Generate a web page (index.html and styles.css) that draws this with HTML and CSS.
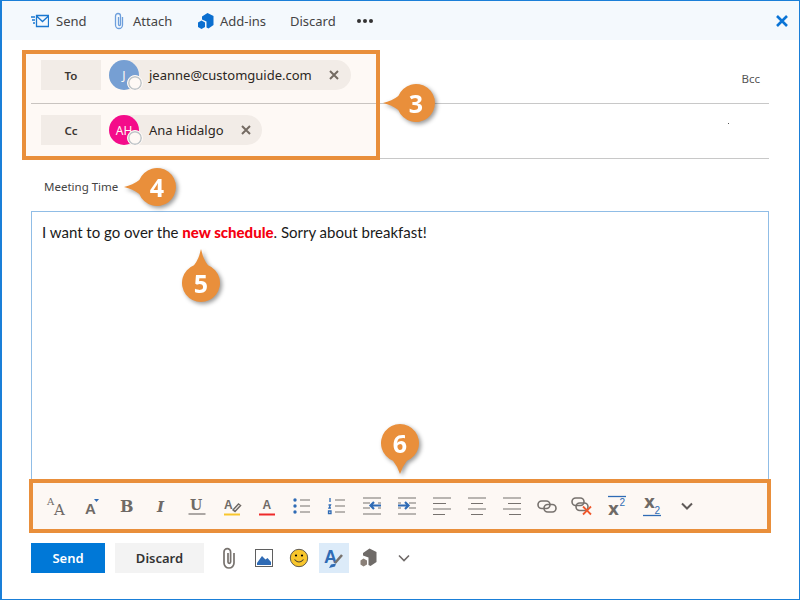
FILE: index.html
```html
<!DOCTYPE html>
<html lang="en">
<head>
<meta charset="utf-8">
<title>Compose</title>
<link rel="stylesheet" href="styles.css">
</head>
<body>
<div class="window">
  <header class="topbar">
    <div class="tb-item tb-send">
      <svg width="18" height="14" viewBox="0 0 18 14"><path class="ln-blue" d="M5.500 1.500h12v11h-12zM5.500 2l6 5.500 6-5.500"/><path class="ln-blue" d="M0 3h4M1 6h3M2 9h2"/></svg>
      <span>Send</span>
    </div>
    <div class="tb-item tb-attach">
      <svg width="12" height="18" viewBox="0 0 12 18"><path class="ln-clip" d="M9.500 5v8a3.500 3.500 0 0 1-7 0V4a2.500 2.500 0 0 1 5 0v8.500a1 1 0 0 1-2 0V5"/></svg>
      <span>Attach</span>
    </div>
    <div class="tb-item tb-addins">
      <svg width="18" height="18" viewBox="0 0 18 18"><path class="fill-blue" d="M5 4.500 10.500 1 16.500 4v9l-5 3.500-2-1V9.500L5 7.500zM1 10.500 4.500 8.500 8 10.500v4.500L4.500 17 1 15z"/></svg>
      <span>Add-ins</span>
    </div>
    <div class="tb-item tb-discard"><span>Discard</span></div>
    <div class="tb-dots"><i></i><i></i><i></i></div>
    <svg class="tb-close" width="12" height="12" viewBox="0 0 12 12"><path d="M1 1l10 10M11 1 1 11"/></svg>
  </header>

  <section class="fields">
    <div class="row">
      <div class="row-btn">To</div>
      <div class="chip chip-a">
        <div class="avatar av-j">J<i class="presence"></i></div>
        <span class="chip-name">jeanne@customguide.com</span>
        <svg class="chip-x" width="10" height="10" viewBox="0 0 10 10"><path d="M1 1l8 8M9 1 1 9"/></svg>
      </div>
      <span class="bcc">Bcc</span>
    </div>
    <div class="row row-last">
      <div class="row-btn">Cc</div>
      <div class="chip chip-b">
        <div class="avatar av-ah">AH<i class="presence"></i></div>
        <span class="chip-name">Ana Hidalgo</span>
        <svg class="chip-x" width="10" height="10" viewBox="0 0 10 10"><path d="M1 1l8 8M9 1 1 9"/></svg>
      </div>
      <i class="speck"></i>
    </div>
    <div class="field-highlight"></div>
  </section>

  <div class="subject">Meeting Time</div>

  <div class="editor">I want to go over the <b class="red">new schedule</b>. Sorry about breakfast!</div>

  <div class="format">
    <div class="fb"><svg viewBox="0 0 24 24"><text class="t-s" x="2" y="11" font-size="10">A</text><text class="t-s" x="9" y="21" font-size="15">A</text></svg></div>
    <div class="fb"><svg viewBox="0 0 24 24"><text class="t-g" x="5" y="20" font-size="15">A</text><path class="fill-b2" d="M14 5h5l-2.500 3z"/></svg></div>
    <div class="fb"><svg viewBox="0 0 24 24"><text class="t-s t-b" x="5" y="18" font-size="16">B</text></svg></div>
    <div class="fb"><svg viewBox="0 0 24 24"><text class="t-s t-i" x="7" y="18" font-size="15">I</text></svg></div>
    <div class="fb"><svg viewBox="0 0 24 24"><text class="t-s t-b" x="5" y="16" font-size="14">U</text><path class="ln-grey" d="M3.500 20h17"/></svg></div>
    <div class="fb"><svg viewBox="0 0 24 24"><text class="t-g" x="4" y="15" font-size="12">A</text><path class="ln-pen" d="M13 16l5.500-6 2 1.500-5.500 6z"/><path class="ln-yellow" d="M4 20.500h16"/></svg></div>
    <div class="fb"><svg viewBox="0 0 24 24"><text class="t-g" x="7.500" y="15" font-size="12">A</text><path class="ln-red" d="M4 20.500h16"/></svg></div>
    <div class="fb"><svg viewBox="0 0 24 24"><circle class="fill-b2" cx="5" cy="6" r="1.700"/><circle class="fill-b2" cx="5" cy="12" r="1.700"/><circle class="fill-b2" cx="5" cy="18" r="1.700"/><path class="ln-grey" d="M10 6h10M10 12h10M10 18h10"/></svg></div>
    <div class="fb"><svg viewBox="0 0 24 24"><path class="ln-blue2" d="M5 4v4M3.500 11h2L4 14h2M3.500 17h2.500v2.500h-2.500z"/><path class="ln-grey" d="M10 6h10M10 12h10M10 18h10"/></svg></div>
    <div class="fb"><svg viewBox="0 0 24 24"><path class="ln-grey" d="M3 4h18M3 9h7M3 14h7M3 20h18M18 9h3M18 14h3"/><path class="arrow" d="M21 11.500h-11M14 8l-3.500 3.500 3.500 3.500"/></svg></div>
    <div class="fb"><svg viewBox="0 0 24 24"><path class="ln-grey" d="M3 4h18M14 9h7M14 14h7M3 20h18M3 9h3M3 14h3"/><path class="arrow" d="M3 11.500h11M10 8l3.500 3.500-3.500 3.500"/></svg></div>
    <div class="fb"><svg viewBox="0 0 24 24"><path class="ln-grey" d="M3 4h18M3 9.500h13M3 15h18M3 20.500h12"/></svg></div>
    <div class="fb"><svg viewBox="0 0 24 24"><path class="ln-grey" d="M3 4h18M6 9.500h12M3 15h18M6 20.500h12"/></svg></div>
    <div class="fb"><svg viewBox="0 0 24 24"><path class="ln-grey" d="M3 4h18M8 9.500h13M3 15h18M9 20.500h12"/></svg></div>
    <div class="fb"><svg viewBox="0 0 24 24"><rect class="ln-link" x="3" y="7" width="12" height="7.500" rx="3.700"/><rect class="ln-link" x="9" y="10.500" width="12" height="7.500" rx="3.700"/></svg></div>
    <div class="fb"><svg viewBox="0 0 24 24"><rect class="ln-link" x="2" y="4" width="12" height="7.500" rx="3.700"/><rect class="ln-link" x="6" y="9" width="12" height="7.500" rx="3.700"/><path class="ln-x" d="M13 12.500l8 8M21 12.500l-8 8"/></svg></div>
    <div class="fb"><svg viewBox="0 0 24 24"><path class="ln-blue2" d="M3 2.500h18"/><text class="t-g t-xb" x="3" y="21" font-size="17">x</text><text class="t-blue" x="14.500" y="12" font-size="10">2</text></svg></div>
    <div class="fb"><svg viewBox="0 0 24 24"><text class="t-g t-xb" x="4" y="14" font-size="17">x</text><text class="t-blue" x="14.500" y="19.500" font-size="10">2</text><path class="ln-blue2" d="M3 21.500h18"/></svg></div>
    <div class="fb"><svg viewBox="0 0 24 24"><path class="ln-chev" d="M7 9.500l5 5 5-5"/></svg></div>
  </div>

  <footer class="actions">
    <div class="btn btn-send">Send</div>
    <div class="btn btn-discard">Discard</div>
    <div class="ab ab-first"><svg viewBox="0 0 24 24"><path class="ln-clip2" d="M17 7v10a5 5 0 0 1-10 0V6a3.300 3.300 0 0 1 6.600 0v10a1.300 1.300 0 0 1-2.600 0V7"/></svg></div>
    <div class="ab"><svg viewBox="0 0 24 24"><rect class="pic-frame" x="3.500" y="3.500" width="17" height="17"/><path class="fill-b2" d="M5 19v-2l5-7 3.500 3.500 2-1.500 3.500 4v3z"/></svg></div>
    <div class="ab"><svg viewBox="0 0 24 24"><circle class="smile" cx="12" cy="12" r="8.700"/><circle cx="9" cy="9.500" r="1.100"/><circle cx="15" cy="9.500" r="1.100"/><path class="smile-m" d="M7.500 13.500q4.500 5 9 0"/></svg></div>
    <div class="ab ab-on"><svg viewBox="0 0 24 24"><text class="t-fmt" x="2" y="17" font-size="18">A</text><path class="ln-brush" d="M13 17l7-8"/><path class="fill-b2" d="M7 22l2-3.500 5-1-1 3z"/></svg></div>
    <div class="ab"><svg viewBox="0 0 24 24"><path class="fill-g" d="M6 7l6.500-4.500 7 3.500v10l-6 4-2-1v-7.500L6 9.500z"/><path class="fill-o" d="M3.500 14.500l3-2 3.500 2v4l-3.500 2-3-2z"/></svg></div>
    <div class="ab"><svg viewBox="0 0 24 24"><path class="ln-chev2" d="M7 9.500l5 5 5-5"/></svg></div>
  </footer>

  <div class="callout c3"><svg class="left" viewBox="-40 -40 80 80"><path d="M0-33Q2-24 7-17.700A19 19 0 1 1-7-17.700Q-2-24 0-33Z"/></svg><span>3</span></div>
  <div class="callout c4"><svg class="left" viewBox="-40 -40 80 80"><path d="M0-33Q2-24 7-17.700A19 19 0 1 1-7-17.700Q-2-24 0-33Z"/></svg><span>4</span></div>
  <div class="callout c5"><svg viewBox="-40 -40 80 80"><path d="M0-34Q2-24 7-17.700A19 19 0 1 1-7-17.700Q-2-24 0-34Z"/></svg><span>5</span></div>
  <div class="callout c6"><svg class="down" viewBox="-40 -40 80 80"><path d="M0-31Q2-24 7-17.700A19 19 0 1 1-7-17.700Q-2-24 0-31Z"/></svg><span>6</span></div>
</div>
</body>
</html>
```

FILE: styles.css
```css
* { box-sizing: border-box; }
html, body { margin: 0; padding: 0; background: #fff; }
body { font-family: "Noto Sans", "Open Sans", sans-serif; color: #333; }

.window {
  position: relative;
  width: 800px;
  height: 600px;
  overflow: hidden;
  background: #fff;
  border: 1px solid #1a7fd8;
  border-left-width: 2px;
}

/* top toolbar */
.topbar {
  display: flex;
  align-items: center;
  height: 39px;
  padding-left: 29px;
  background: #f4f9fd;
  font-size: 13px;
  color: #444;
}
.tb-item { display: flex; align-items: center; }
.tb-send { width: 82px; gap: 7px; }
.tb-attach { width: 84px; gap: 8px; }
.tb-addins { width: 93px; gap: 5px; }
.tb-discard { width: 67px; }
.tb-dots { display: flex; gap: 2px; }
.tb-dots i { width: 4px; height: 4px; border-radius: 50%; background: #333; }
.tb-close { margin-left: auto; margin-right: 11px; fill: none; stroke: #0a74d6; stroke-width: 2.600; }
.ln-blue { fill: none; stroke: #1b78d0; stroke-width: 1.300; }
.ln-clip { fill: none; stroke: #6d9fdc; stroke-width: 1.300; }
.fill-blue { fill: #0a6fd0; }

/* recipients */
.fields { position: relative; padding: 20px 30px 0 29px; }
.row {
  position: relative;
  display: flex;
  padding: 0 0 13px 10px;
  margin-bottom: 11px;
  border-bottom: 1px solid #c8c8c8;
}
.row-last { margin-bottom: 0; }
.row-btn {
  display: flex;
  align-items: center;
  justify-content: center;
  width: 60px;
  height: 30px;
  margin-right: 8px;
  background: #f3f2f1;
  font-size: 11.500px;
  font-weight: 600;
}
.chip {
  display: flex;
  align-items: center;
  height: 30px;
  padding-right: 12px;
  border-radius: 15px;
  background: #f3f2f1;
}
.chip-b { padding-right: 11px; }
.avatar {
  position: relative;
  display: flex;
  align-items: center;
  justify-content: center;
  width: 30px;
  height: 30px;
  border-radius: 50%;
  color: #fff;
  font-size: 12px;
}
.av-j { background: #70a1dc; }
.av-ah { background: #f5068f; }
.presence {
  position: absolute;
  right: -4px;
  bottom: -1px;
  width: 16px;
  height: 16px;
  border-radius: 50%;
  background: #fff;
  border: 1.500px solid #fff;
  box-shadow: inset 0 0 0 1.500px #bcc8d0;
}
.chip-name { margin: 0 17px 0 10px; font-size: 13px; color: #222; white-space: nowrap; }
.chip-x { fill: none; stroke: #6e6a66; stroke-width: 2; }
.bcc { margin-left: auto; margin-right: 9px; margin-top: 11px; font-size: 11.500px; color: #555; }
.speck { position: absolute; right: 40px; top: 8px; width: 1px; height: 1px; background: #555; }
.field-highlight {
  position: absolute;
  left: 20px;
  top: 10px;
  width: 358px;
  height: 110px;
  border: 4px solid #e98f3b;
  background: rgba(233, 143, 59, 0.05);
  pointer-events: none;
}

/* subject */
.subject {
  height: 52px;
  padding: 20px 0 0 42px;
  font-size: 11.500px;
  color: #444;
}

/* editor */
.editor {
  height: 268px;
  margin: 0 30px 0 29px;
  padding: 10px 10px;
  border: 1px solid #90bde6;
  border-bottom: 0;
  font-family: "Lato", sans-serif;
  font-size: 15px;
  line-height: 20px;
  color: #1a1a1a;
}
.red { color: #f50010; font-weight: 900; }

/* format toolbar */
.format {
  display: flex;
  align-items: center;
  height: 54px;
  margin: 0 28px 0 27px;
  padding-left: 6px;
  border: 4px solid #e98f3b;
  background: #fdf8f4;
}
.fb {
  display: flex;
  align-items: center;
  justify-content: center;
  width: 35px;
  height: 30px;
}
.fb svg { width: 24px; height: 24px; overflow: visible; }
.t-s { font-family: "DejaVu Serif", serif; fill: #6f6a66; }
.t-g { font-family: "Liberation Sans", sans-serif; fill: #6f6a66; font-weight: 700; }
.t-b { font-weight: 700; }
.t-i { font-style: italic; font-weight: 700; }
.t-xb { font-family: "DejaVu Sans", sans-serif; }
.t-blue { font-family: "Liberation Sans", sans-serif; fill: #2f6bb5; }
.ln-grey { fill: none; stroke: #77726e; stroke-width: 1.200; }
.ln-link { fill: none; stroke: #77726e; stroke-width: 1.600; }
.ln-pen { fill: #fdf8f4; stroke: #6f6a66; stroke-width: 1.500; }
.ln-yellow { stroke: #f8c62c; stroke-width: 2; }
.ln-red { stroke: #ee2a2a; stroke-width: 2; }
.ln-blue2 { fill: none; stroke: #2f6bb5; stroke-width: 1.300; }
.ln-x { stroke: #f0582c; stroke-width: 1.800; }
.arrow { fill: none; stroke: #2f6bb5; stroke-width: 2.200; }
.fill-b2 { fill: #2f6bb5; }
.ln-chev { fill: none; stroke: #5f5a58; stroke-width: 2; }

/* footer */
.actions { display: flex; margin: 10px 0 0 29px; }
.btn {
  display: flex;
  align-items: center;
  justify-content: center;
  height: 30px;
  font-size: 13px;
  font-weight: 600;
}
.btn-send { width: 74px; margin-right: 10px; background: #0078d7; color: #fff; }
.btn-discard { width: 89px; background: #f3f3f3; color: #333; }
.ab {
  display: flex;
  align-items: center;
  justify-content: center;
  width: 30px;
  height: 30px;
  margin-left: 5px;
}
.ab-first { margin-left: 10px; }
.ab-on { background: #dcebf9; }
.ab svg { width: 24px; height: 24px; }
.ln-clip2 { fill: none; stroke: #77726e; stroke-width: 1.700; }
.pic-frame { fill: #fff; stroke: #5f5f5f; stroke-width: 1; }
.smile { fill: #f8c62c; stroke: #5f5a50; stroke-width: 1; }
.smile-m { fill: none; stroke: #4a4030; stroke-width: 1.100; }
.t-fmt { font-family: "Liberation Sans", sans-serif; font-weight: 700; fill: #2f6bb5; }
.ln-brush { stroke: #77726e; stroke-width: 2.500; }
.fill-g { fill: #6f6b68; }
.fill-o { fill: #8a8078; }
.ln-chev2 { fill: none; stroke: #6f6a68; stroke-width: 1.600; }

/* numbered callouts */
.callout {
  position: absolute;
  display: flex;
  align-items: center;
  justify-content: center;
  width: 80px;
  height: 80px;
  filter: drop-shadow(2px 2px 2px rgba(0, 0, 0, 0.4));
}
.callout svg { position: absolute; inset: 0; width: 80px; height: 80px; fill: #e98f3b; }
.callout svg.left { transform: rotate(-90deg); }
.callout svg.down { transform: rotate(180deg); }
.callout span {
  position: relative;
  font-family: "Open Sans", sans-serif;
  font-size: 25px;
  font-weight: 700;
  color: #fff;
}
.c3 { left: 374px; top: 62px; }
.c4 { left: 115px; top: 146px; }
.c5 { left: 159px; top: 242px; }
.c6 { left: 358px; top: 402px; }
```
